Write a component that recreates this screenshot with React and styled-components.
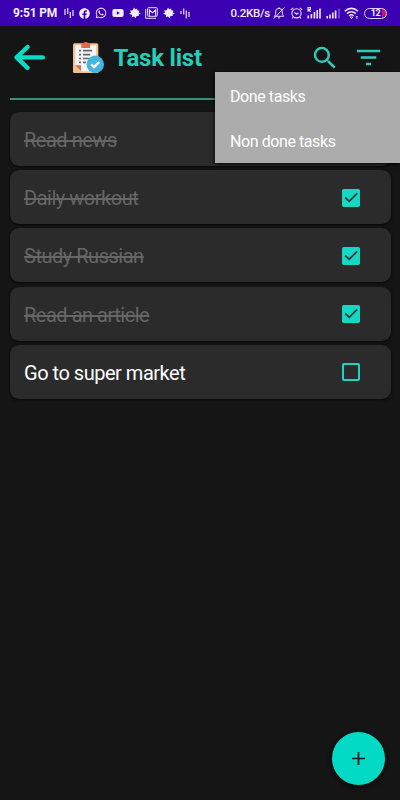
import React from 'react';
import styled, { createGlobalStyle } from 'styled-components';
import { FaFacebook, FaWhatsapp, FaYoutube } from 'react-icons/fa';
import { MdCheckBoxOutlineBlank, MdFilterList, MdSearch } from 'react-icons/md';

const tasks = [
    { id: 1, title: 'Read news', done: true },
    { id: 2, title: 'Daily workout', done: true },
    { id: 3, title: 'Study Russian', done: true },
    { id: 4, title: 'Read an article', done: true },
    { id: 5, title: 'Go to super market', done: false },
];

const BarsIcon = ({ flip }) => (
    <svg width="10" height="12" viewBox="0 0 10 12" stroke="#cfc4f2" strokeWidth="1.4">
        {flip
            ? <path d="M1 4v3M3.7 1.5v6M6.3 3.5v8M9 5v5" />
            : <path d="M1 2v6M3.7 1v6M6.3 5v6M9 3v6" />}
    </svg>
);

const SplatIcon = () => (
    <svg width="12" height="12" viewBox="0 0 12 12" fill="#f1edff">
        <path d="M5 .4l1.2 1.9 2-.9.1 1.9 2.3.5-1 1.5L12 6.7l-2.4.6.2 1.8-2.3-.2-.8 2.4L5 9.4l-2.4.9.6-2.3L0 6.8l2.1-1.3L1 3.4l2.7-.1z" />
    </svg>
);

const MailIcon = () => (
    <svg width="13" height="12" viewBox="0 0 13 12" fill="none" stroke="#e6e0fb">
        <path d="M.7 2v9.3H11" strokeWidth="1" />
        <rect x="2.6" y=".7" width="9.7" height="8.6" rx=".8" strokeWidth="1" />
        <path d="M4.4 9V3l3.1 2.7L10.6 3v6" strokeWidth="1.1" />
    </svg>
);

const BellOffIcon = () => (
    <svg width="12" height="12" viewBox="0 0 12 12" fill="none" stroke="#e6e0fb" strokeWidth="1">
        <path d="M1.3 9.3h9.4L9.4 7.6V4.7A3.3 3.3 0 0 0 6 1.4a3.3 3.3 0 0 0-3.4 3.3v2.9zM5 10.9h2M6 .2v1.2M.8 11.6L11.4.6" />
    </svg>
);

const AlarmIcon = () => (
    <svg width="13" height="12" viewBox="0 0 13 12" fill="none" stroke="#e6e0fb" strokeWidth="1.1">
        <circle cx="6.5" cy="6.3" r="4.6" />
        <path d="M.8 2.8L3.2.8M12.2 2.8L9.8.8M4.4 5.4l2.1 1.8 2-1.5M3.2 10l-1 1.4M9.8 10l1 1.4" />
    </svg>
);

const SignalIcon = ({ roaming }) => (
    <svg width="14" height="12" viewBox="0 0 14 12" fill="none" stroke="#e6e0fb" strokeWidth="1.7">
        {roaming && <path d="M1 4.8V.6h2.4v2H1.2l2.4 2.2" strokeWidth="1.1" />}
        <path d={roaming ? 'M1.2 8.5v3M4.4 7v4.5M7.4 5v6.5M10.2 3v8.5' : 'M1.2 9v2.5M4 7.5v4M6.8 5.5v6M9.6 3.5v8'} />
        <path d="M13 1.5v10" strokeOpacity={roaming ? 1 : 0.35} />
    </svg>
);

const WifiIcon = () => (
    <svg width="15" height="12" viewBox="0 0 15 12" fill="none" stroke="#e6e0fb" strokeWidth="1.6">
        <path d="M.8 4.2a9.2 9.2 0 0 1 13.2 0M3 6.6a6.2 6.2 0 0 1 8.8 0M5.2 8.8a3.2 3.2 0 0 1 4.4 0" />
        <path d="M6 10l1.4 1.6L8.8 10zM11.8 9.5h2M11.8 11h2" strokeWidth=".9" />
    </svg>
);

const ArrowIcon = () => (
    <svg width="32" height="28" viewBox="0 0 32 28" fill="none" stroke="#0bdcc5" strokeWidth="4.4" strokeLinecap="round" strokeLinejoin="round">
        <path d="M13.5 3L2.6 13.4l10.9 10.4M3.2 13.4h25.6" />
    </svg>
);

const ClipboardIcon = () => (
    <svg width="32" height="32" viewBox="0 0 32 32">
        <rect x="0" y="1.3" width="25.3" height="29.7" rx="1.6" fill="#efc28c" />
        <path d="M2.2 3.2h21v26H8l-5.8-5.8z" fill="#f7f5f3" />
        <path d="M2.2 23.2H8v6z" fill="#df6a50" />
        <path d="M8.3 1.2h2C10.8.4 11.6 0 12.7 0s2 .4 2.4 1.2h2V6H8.3z" fill="#e2674a" />
        <g stroke="#596b7a" strokeWidth="1.7">
            <path d="M6 8.7h2M6 12.6h2M6 16.5h2M6 20.4h2M10 8.7h9.2M10 12.6h7.2M10 16.5h9.2M10 20.4h3" />
        </g>
        <circle cx="22.3" cy="22.3" r="8.7" fill="#41b5e2" />
        <path d="M18.2 22.4l2.8 2.7 5.2-4.9" fill="none" stroke="#fff" strokeWidth="2.4" />
    </svg>
);

const CheckedIcon = () => (
    <svg width="24" height="24" viewBox="0 0 24 24">
        <rect x="3" y="3" width="18" height="18" rx="1.8" fill="#14d8c4" />
        <path d="M6.2 11.5l4 3.8 8-8" fill="none" stroke="#223c39" strokeWidth="1.8" />
    </svg>
);

const PlusIcon = () => (
    <svg width="14" height="14" viewBox="0 0 14 14" stroke="#0c1c1a" strokeWidth="1.7">
        <path d="M0 6.5h13M6.5 0v13" />
    </svg>
);

const Task = ({ task }) => (
    <Card>
        <TaskTitle $done={task.done}>{task.title}</TaskTitle>
        {task.done ? <CheckedIcon /> : <MdCheckBoxOutlineBlank size={24} />}
    </Card>
);

const App = () => {
    return (
        <>
        <GlobalStyle />
        <Screen>
            <StatusBar>
                <Clock>9:51 PM</Clock>
                <Notifications>
                    <BarsIcon />
                    <FaFacebook size={11} />
                    <FaWhatsapp size={12} />
                    <FaYoutube size={12} />
                    <SplatIcon />
                    <MailIcon />
                    <SplatIcon />
                    <BarsIcon flip />
                </Notifications>
                <Speed>0.2KB/s</Speed>
                <Indicators>
                    <BellOffIcon />
                    <AlarmIcon />
                    <SignalIcon roaming />
                    <SignalIcon />
                    <WifiIcon />
                    <Battery>12</Battery>
                </Indicators>
            </StatusBar>
            <Header>
                <ArrowIcon />
                <Brand>
                    <ClipboardIcon />
                    <Title>Task list</Title>
                </Brand>
                <Actions>
                    <MdSearch size={30} />
                    <MdFilterList size={31} />
                </Actions>
                <Menu>
                    <MenuItem>Done tasks</MenuItem>
                    <MenuItem>Non done tasks</MenuItem>
                </Menu>
            </Header>
            <Divider />
            <List>
                {tasks.map(task => <Task key={task.id} task={task} />)}
            </List>
            <AddButton aria-label="Add task"><PlusIcon /></AddButton>
        </Screen>
        </>
    );
}

export default App;

const GlobalStyle = createGlobalStyle`
    body {
        margin: 0;
        background: #151515;
        font-family: Roboto, "Liberation Sans", sans-serif;
    }

    svg {
        display: block;
        flex-shrink: 0;
    }
`;
const Screen = styled.div`
    position: relative;
    width: 400px;
    height: 800px;
    overflow: hidden;
    background: #151515;
`;
const StatusBar = styled.div`
    display: flex;
    align-items: center;
    box-sizing: border-box;
    height: 26px;
    padding: 0 13px;
    background: #3a00b1;
    color: #f1edff;
`;
const Clock = styled.span`
    width: 51px;
    font-size: 12px;
    font-weight: 700;
    letter-spacing: -0.15px;
    white-space: nowrap;
`;
const Notifications = styled.div`
    display: flex;
    align-items: center;
    gap: 4.9px;
`;
const Speed = styled.span`
    margin-left: auto;
    margin-right: 3px;
    font-size: 11.5px;
    font-weight: 500;
    letter-spacing: -0.25px;
    white-space: nowrap;
`;
const Indicators = styled.div`
    display: flex;
    align-items: center;
    gap: 4.6px;
`;
const Battery = styled.span`
    box-sizing: border-box;
    width: 23px;
    height: 11px;
    border: 1px solid #d9d0f7;
    border-radius: 6px;
    background: linear-gradient(to right, transparent 17px, #c8175f 17px);
    font-size: 9px;
    font-weight: 700;
    letter-spacing: -0.3px;
    line-height: 9px;
    text-align: center;
`;
const Header = styled.header`
    position: relative;
    display: flex;
    align-items: center;
    box-sizing: border-box;
    height: 72px;
    padding: 0 16px 9px 14px;
`;
const Brand = styled.div`
    display: flex;
    align-items: center;
    margin-left: 27px;
    gap: 8.5px;
`;
const Title = styled.h1`
    margin: 0;
    padding-top: 1px;
    color: #26cdb9;
    font-size: 24px;
    font-weight: 700;
    letter-spacing: -0.2px;
    line-height: 28px;
    white-space: nowrap;
`;
const Actions = styled.div`
    display: flex;
    align-items: center;
    gap: 13px;
    margin-left: auto;
    color: #30cabb;
`;
const Menu = styled.div`
    position: absolute;
    z-index: 1;
    top: 46px;
    right: 0;
    box-sizing: border-box;
    width: 185px;
    height: 91px;
    padding-top: 2px;
    background: #acacac;
    box-shadow: 0 1px 4px #000;
`;
const MenuItem = styled.div`
    height: 45px;
    padding-left: 15px;
    color: #fff;
    font-size: 16px;
    letter-spacing: -0.42px;
    line-height: 45px;
`;
const Divider = styled.div`
    height: 2px;
    margin: 0 9px 0 10px;
    background: #3d8c80;
`;
const List = styled.div`
    display: flex;
    flex-direction: column;
    gap: 4.2px;
    padding: 12px 9px 0 10px;
`;
const Card = styled.div`
    display: flex;
    align-items: center;
    justify-content: space-between;
    box-sizing: border-box;
    height: 54px;
    padding: 1px 28px 0 14px;
    border-radius: 9px;
    background: #2b2b2b;
    box-shadow: 0 1px 3px #080808;
    color: #1cd6c3;
`;
const TaskTitle = styled.span`
    padding-top: 1px;
    color: ${({ $done }) => ($done ? '#666' : '#fff')};
    font-size: 20px;
    letter-spacing: -0.48px;
    text-decoration: ${({ $done }) => ($done ? 'line-through' : 'none')};
`;
const AddButton = styled.button`
    position: absolute;
    right: 15px;
    bottom: 15px;
    display: flex;
    align-items: center;
    justify-content: center;
    width: 53px;
    height: 53px;
    padding: 0;
    border: 0;
    border-radius: 50%;
    background: #02dac5;
    box-shadow: 0 2px 5px #060606;
    color: #111;
`;
